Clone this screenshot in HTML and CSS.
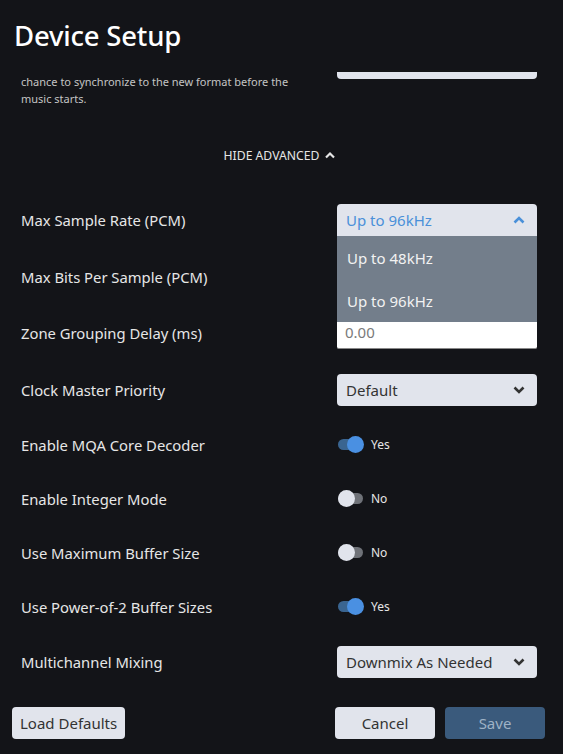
FILE: index.html
```html
<!DOCTYPE html>
<html>
<head>
<meta charset="utf-8">
<link rel="stylesheet" href="styles.css">
</head>
<body>
<div class="app">
  <header class="header"><h1 class="title">Device Setup</h1></header>
  <div class="scroll">
    <div class="content">
      <div class="row row-desc">
        <div class="label-col">
          <div class="desc">When the format changes, a delay giving the DAC a<br>chance to synchronize to the new format before the<br>music starts.</div>
        </div>
        <div class="control control-top"><div class="input-light"></div></div>
      </div>

      <div class="adv"><span>HIDE ADVANCED</span>
        <svg class="adv-chev" width="12" height="10" viewBox="0 0 12 10"><polyline points="2,7.5 6,3.5 10,7.5" fill="none" stroke="#e6e6e6" stroke-width="2.2"/></svg>
      </div>

      <div class="rows">
        <div class="row">
          <div class="label">Max Sample Rate (PCM)</div>
          <div class="control select-wrap">
            <div class="select open"><span>Up to 96kHz</span>
              <svg class="chev" width="14" height="10" viewBox="0 0 14 10"><polyline points="2.5,7.5 7,3 11.5,7.5" fill="none" stroke="#4a90d9" stroke-width="2.6"/></svg>
            </div>
            <div class="menu">
              <div class="menu-item">Up to 48kHz</div>
              <div class="menu-item">Up to 96kHz</div>
            </div>
          </div>
        </div>
        <div class="row">
          <div class="label">Max Bits Per Sample (PCM)</div>
          <div class="control"><div class="select"><span>Auto</span>
            <svg class="chev" width="14" height="10" viewBox="0 0 14 10"><polyline points="2.5,2.5 7,7 11.5,2.5" fill="none" stroke="#333" stroke-width="2.6"/></svg></div></div>
        </div>
        <div class="row">
          <div class="label">Zone Grouping Delay (ms)</div>
          <div class="control"><div class="input">0.00</div></div>
        </div>
        <div class="row">
          <div class="label">Clock Master Priority</div>
          <div class="control"><div class="select"><span>Default</span>
            <svg class="chev" width="14" height="10" viewBox="0 0 14 10"><polyline points="2.5,2.5 7,7 11.5,2.5" fill="none" stroke="#333" stroke-width="2.6"/></svg></div></div>
        </div>
        <div class="row row-toggle">
          <div class="label">Enable MQA Core Decoder</div>
          <div class="control"><div class="toggle on"><span class="track"><span class="knob"></span></span><span class="tlabel">Yes</span></div></div>
        </div>
        <div class="row row-toggle">
          <div class="label">Enable Integer Mode</div>
          <div class="control"><div class="toggle"><span class="track"><span class="knob"></span></span><span class="tlabel">No</span></div></div>
        </div>
        <div class="row row-toggle">
          <div class="label">Use Maximum Buffer Size</div>
          <div class="control"><div class="toggle"><span class="track"><span class="knob"></span></span><span class="tlabel">No</span></div></div>
        </div>
        <div class="row row-toggle">
          <div class="label">Use Power-of-2 Buffer Sizes</div>
          <div class="control"><div class="toggle on"><span class="track"><span class="knob"></span></span><span class="tlabel">Yes</span></div></div>
        </div>
        <div class="row">
          <div class="label">Multichannel Mixing</div>
          <div class="control"><div class="select"><span>Downmix As Needed</span>
            <svg class="chev" width="14" height="10" viewBox="0 0 14 10"><polyline points="2.5,2.5 7,7 11.5,2.5" fill="none" stroke="#333" stroke-width="2.6"/></svg></div></div>
        </div>
      </div>
    </div>
  </div>
  <footer class="footer">
    <button class="btn">Load Defaults</button>
    <div class="footer-right">
      <button class="btn btn-fixed">Cancel</button>
      <button class="btn btn-fixed btn-primary">Save</button>
    </div>
  </footer>
</div>
</body>
</html>
```
FILE: styles.css
```css
html, body {
  margin: 0;
  padding: 0;
  background: #131418;
}
body {
  font-family: "Noto Sans", "Open Sans", sans-serif;
  color: #e6e6e6;
}
.app {
  width: 563px;
  height: 754px;
  display: flex;
  flex-direction: column;
  overflow: hidden;
}
.header {
  height: 72px;
  flex: none;
  padding-left: 14px;
  box-sizing: border-box;
  position: relative;
  z-index: 2;
  background: #131418;
}
.title {
  margin: 0;
  padding-top: 16px;
  font-size: 27.5px;
  line-height: 40px;
  font-weight: 500;
  color: #ffffff;
  letter-spacing: -0.2px;
}
.scroll {
  flex: 1;
  overflow: hidden;
  padding: 0 26px 0 21px;
}
.content {
  margin-top: -16px;
}
.row {
  display: flex;
  justify-content: space-between;
  align-items: center;
  height: 32px;
}
.row-desc {
  height: auto;
  align-items: flex-start;
}
.label-col {
  width: 300px;
}
.label {
  font-size: 14.8px;
  line-height: 20px;
  color: #e6e6e6;
}
.desc {
  font-size: 11px;
  line-height: 17px;
  color: #c4c4c4;
}
.control {
  width: 200px;
  flex: none;
}
.control-top {
  margin-top: -9px;
}
.input-light {
  height: 32px;
  background: #e1e4ec;
  border-radius: 4px;
}
.adv {
  margin-top: 38px;
  height: 20px;
  display: flex;
  justify-content: center;
  align-items: center;
  gap: 5px;
  font-size: 12.2px;
  color: #e6e6e6;
  padding-left: 2px;
}
.rows {
  margin-top: 39px;
  display: flex;
  flex-direction: column;
  gap: 24.5px;
}
.row-toggle {
  height: 29.5px;
}
.select-wrap {
  position: relative;
}
.select {
  height: 32px;
  background: #e1e4ec;
  border-radius: 4px;
  display: flex;
  align-items: center;
  justify-content: space-between;
  padding: 0 11px 0 9px;
  box-sizing: border-box;
  font-size: 15px;
  color: #333;
}
.select.open {
  color: #4a90d9;
  border-radius: 4px 4px 0 0;
}
.chev {
  display: block;
}
.menu {
  position: absolute;
  left: 0;
  right: 0;
  top: 32px;
  background: #737e8b;
  z-index: 5;
}
.menu-item {
  height: 43px;
  line-height: 44px;
  padding-left: 10px;
  font-size: 15px;
  color: #f2f2f2;
}
.input {
  height: 32px;
  background: #ffffff;
  border-radius: 2px;
  border-bottom: 1px solid #888;
  box-sizing: border-box;
  font-size: 15px;
  color: #7a7a7a;
  line-height: 31px;
  padding-left: 8px;
}
.toggle {
  display: flex;
  align-items: center;
  gap: 8px;
  padding-left: 1px;
}
.track {
  position: relative;
  width: 25px;
  height: 11px;
  border-radius: 6px;
  background: #6f7278;
}
.knob {
  position: absolute;
  top: -3px;
  left: 0;
  width: 17px;
  height: 17px;
  border-radius: 50%;
  background: #e1e4ec;
}
.toggle.on .track {
  background: #3a6591;
}
.toggle.on .knob {
  left: auto;
  right: -1px;
  background: #4a90e2;
}
.tlabel {
  font-size: 12px;
  color: #e6e6e6;
}
.footer {
  height: 59px;
  flex: none;
  display: flex;
  justify-content: space-between;
  align-items: flex-start;
  padding: 12px 18px 0 12px;
  box-sizing: border-box;
}
.footer-right {
  display: flex;
  gap: 10px;
}
.btn {
  height: 32px;
  border: none;
  border-radius: 4px;
  background: #e1e4ec;
  color: #333;
  font-family: "Noto Sans", "Open Sans", sans-serif;
  font-size: 15px;
  padding: 0 8px;
}
.btn-fixed {
  width: 100px;
}
.btn-primary {
  background: #3a5a7c;
  color: #9fb2c6;
}
```
